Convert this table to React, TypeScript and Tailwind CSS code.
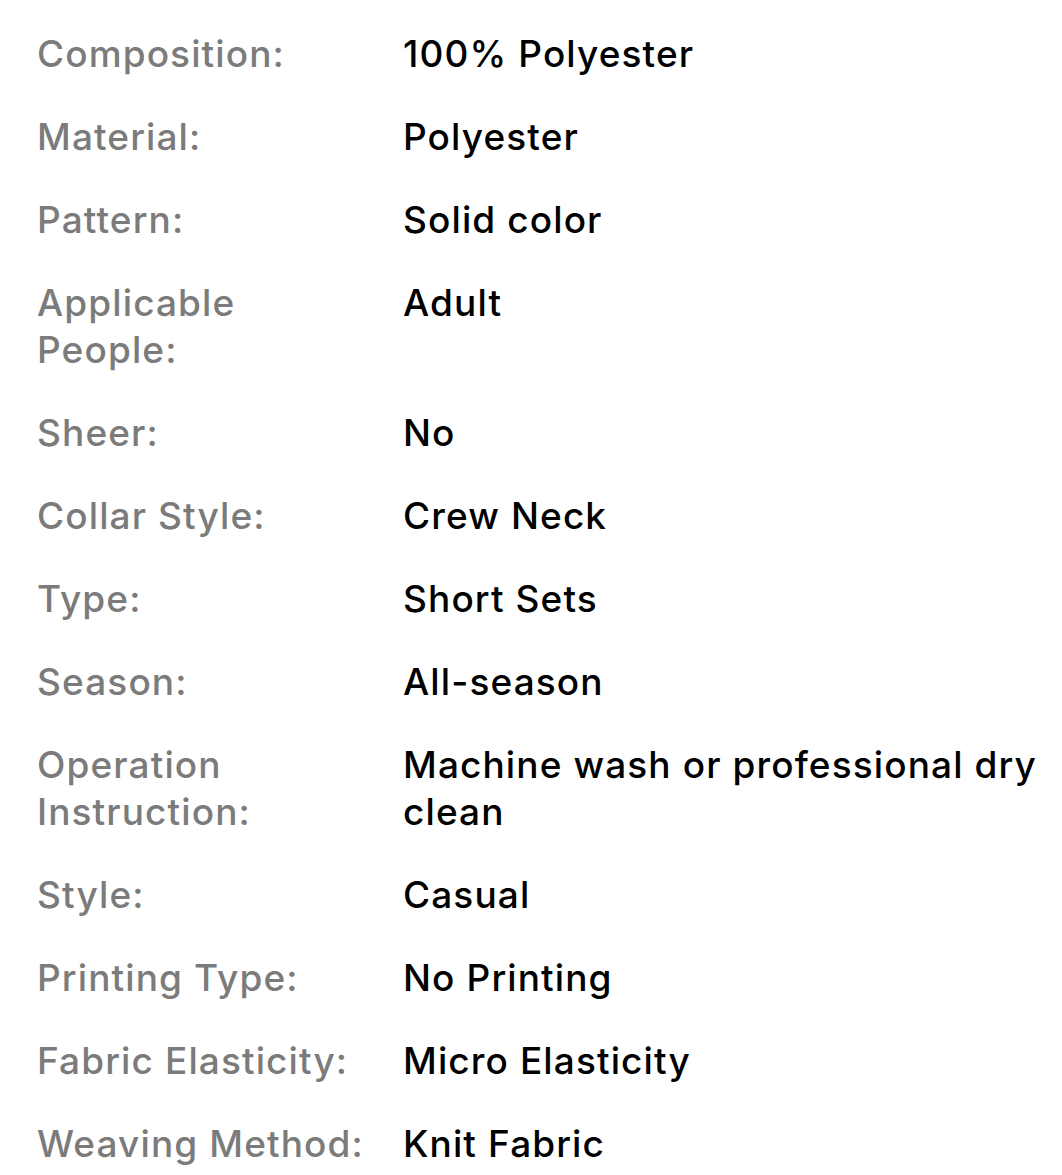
const rows: { label: string; value: string }[] = [
  { label: "Composition:", value: "100% Polyester" },
  { label: "Material:", value: "Polyester" },
  { label: "Pattern:", value: "Solid color" },
  { label: "Applicable People:", value: "Adult" },
  { label: "Sheer:", value: "No" },
  { label: "Collar Style:", value: "Crew Neck" },
  { label: "Type:", value: "Short Sets" },
  { label: "Season:", value: "All-season" },
  { label: "Operation Instruction:", value: "Machine wash or professional dry clean" },
  { label: "Style:", value: "Casual" },
  { label: "Printing Type:", value: "No Printing" },
  { label: "Fabric Elasticity:", value: "Micro Elasticity" },
  { label: "Weaving Method:", value: "Knit Fabric" },
];

export default function App() {
  return (
    <div className="w-[1062px] h-[1175px] overflow-hidden bg-white font-['Inter',sans-serif]">
      <div className="flex flex-col gap-[36px] pt-[30px] pl-[37px]">
        {rows.map((row) => (
          <div key={row.label} className="flex text-[37px] leading-[47px] font-medium tracking-[0.03em]">
            <div className="w-[366px] shrink-0 pr-[24px] text-[#7b7b7b]">{row.label}</div>
            <div className="flex-1 text-black">{row.value}</div>
          </div>
        ))}
      </div>
    </div>
  );
}
